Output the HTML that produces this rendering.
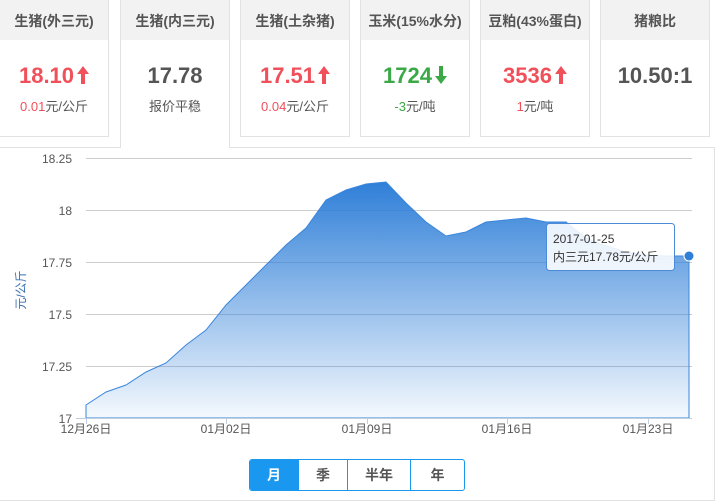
<!DOCTYPE html><html><head><meta charset="utf-8"><style>
body{margin:0;width:717px;height:502px;background:#fff;font-family:"Liberation Sans","Noto Sans CJK SC",sans-serif;position:relative;overflow:hidden}
.c{position:absolute;top:-1px;width:108px;height:136px;border:1px solid #e2e2e2;background:#fff;text-align:center}
.c .h{height:40px;background:#f2f2f2;font-weight:bold;font-size:14px;color:#555;line-height:42px}
.c .v{font-size:22px;font-weight:bold;margin-top:22px;height:28px;line-height:28px}
.c .v svg{vertical-align:-1px;margin-left:3px}
.c .s{font-size:13px;color:#555;margin-top:6px}
.r{color:#f0505a}.g{color:#3aa845}.k{color:#555}
.c.a{height:148px;border-bottom:none;z-index:2}
.panel{position:absolute;left:0;top:147px;width:714px;height:352px;border:1px solid #e2e2e2;border-left:none}
.btns{position:absolute;left:249px;top:459px;height:30px;display:flex;border:1px solid #1a98f0;border-radius:3px;overflow:hidden}
.btns div{height:30px;line-height:30px;text-align:center;font-size:14px;font-weight:bold;color:#555;border-left:1px solid #1a98f0}
</style></head><body>
<div class="c" style="left:-1px"><div class="h">生猪(外三元)</div><div class="v r">18.10<svg width="12" height="18" viewBox="0 0 12 18"><path d="M6 0L12 8H8V18H4V8H0Z" fill="#f0505a"/></svg></div><div class="s"><span class="r">0.01</span>元/公斤</div></div>
<div class="c a" style="left:120px"><div class="h">生猪(内三元)</div><div class="v k">17.78</div><div class="s">报价平稳</div></div>
<div class="c" style="left:240px"><div class="h">生猪(土杂猪)</div><div class="v r">17.51<svg width="12" height="18" viewBox="0 0 12 18"><path d="M6 0L12 8H8V18H4V8H0Z" fill="#f0505a"/></svg></div><div class="s"><span class="r">0.04</span>元/公斤</div></div>
<div class="c" style="left:360px"><div class="h">玉米(15%水分)</div><div class="v g">1724<svg width="12" height="18" viewBox="0 0 12 18"><path d="M6 18L12 10H8V0H4V10H0Z" fill="#3aa845"/></svg></div><div class="s"><span class="g">-3</span>元/吨</div></div>
<div class="c" style="left:480px"><div class="h">豆粕(43%蛋白)</div><div class="v r">3536<svg width="12" height="18" viewBox="0 0 12 18"><path d="M6 0L12 8H8V18H4V8H0Z" fill="#f0505a"/></svg></div><div class="s"><span class="r">1</span>元/吨</div></div>
<div class="c" style="left:600px"><div class="h">猪粮比</div><div class="v k">10.50:1</div></div>
<div class="panel"></div>
<svg style="position:absolute;left:0;top:0" width="717" height="502" font-family="Liberation Sans,Noto Sans CJK SC,sans-serif" font-size="12" fill="#555">
<defs><linearGradient id="gr" x1="0" y1="0" x2="0" y2="1"><stop offset="0" stop-color="#2f7fd8"/><stop offset="1" stop-color="#2f7fd8" stop-opacity="0.05"/></linearGradient></defs>
<g stroke="#ccc" stroke-width="1">
<line x1="86" y1="158.5" x2="692" y2="158.5"/><line x1="86" y1="210.5" x2="692" y2="210.5"/><line x1="86" y1="262.5" x2="692" y2="262.5"/><line x1="86" y1="314.5" x2="692" y2="314.5"/><line x1="86" y1="366.5" x2="692" y2="366.5"/>
</g>
<path d="M86,405L106,392L126,385L146,372L166,363L186,345L206,330L226,305L246,285L266,265L286,245L306,228L326,200L346,190L366,184L386,182L406,203L426,222L446,236L466,232L486,222L506,220L526,218L546,222L566,222L586,238L606,246L626,252L646,255L666,256L689,256L689,418L86,418Z" fill="url(#gr)" stroke="#3a86dc" stroke-width="1"/>
<line x1="76" y1="418.5" x2="692" y2="418.5" stroke="#c0cfe0"/>
<g stroke="#c0cfe0"><line x1="86.5" y1="418" x2="86.5" y2="424"/><line x1="226.5" y1="418" x2="226.5" y2="424"/><line x1="367.5" y1="418" x2="367.5" y2="424"/><line x1="507.5" y1="418" x2="507.5" y2="424"/><line x1="648.5" y1="418" x2="648.5" y2="424"/></g>
<g text-anchor="end"><text x="72" y="163">18.25</text><text x="72" y="215">18</text><text x="72" y="267">17.75</text><text x="72" y="319">17.5</text><text x="72" y="371">17.25</text><text x="72" y="423">17</text></g>
<g text-anchor="middle"><text x="86" y="433">12月26日</text><text x="226" y="433">01月02日</text><text x="367" y="433">01月09日</text><text x="507" y="433">01月16日</text><text x="648" y="433">01月23日</text></g>
<text transform="translate(25,290) rotate(-90)" text-anchor="middle" fill="#3a6fb0">元/公斤</text>
<circle cx="689" cy="256" r="5" fill="#2f7fd8" stroke="#fff" stroke-width="1"/>
<rect x="546.5" y="223.5" width="128" height="47" rx="3" fill="#fff" fill-opacity="0.88" stroke="#4a8ad8"/>
<text x="553" y="243" fill="#333">2017-01-25</text><text x="553" y="261" fill="#333">内三元17.78元/公斤</text>
</svg>
<div class="btns"><div style="width:48px;background:#1a98f0;color:#fff;border-left:none">月</div><div style="width:48px">季</div><div style="width:62px">半年</div><div style="width:53px">年</div></div>
</body></html>
